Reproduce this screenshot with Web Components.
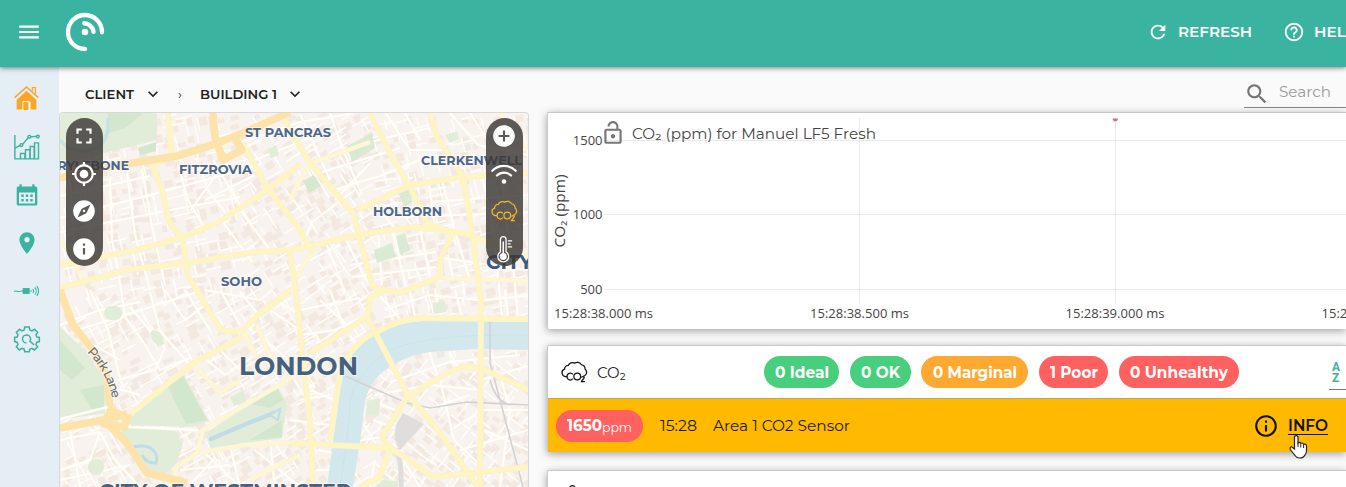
<!DOCTYPE html>
<html lang="en">
<head>
<meta charset="utf-8">
<title>Building sensors</title>
<style>
html,body{margin:0;height:100%;overflow:hidden;background:#fafafa;font-family:Montserrat,Inter,"Noto Sans",sans-serif}
</style>
</head>
<body>
<sensor-app></sensor-app>
<script>
const define = (name, html, after) => customElements.define(name, class extends HTMLElement {
  constructor(){ super(); this.attachShadow({mode:'open'}); }
  connectedCallback(){
    if (this.ready) return;
    this.ready = true;
    const t = document.createElement('template');
    t.innerHTML = typeof html === 'function' ? html(this) : html;
    this.shadowRoot.append(t.content.cloneNode(true));
    if (after) after(this);
  }
});

const CO2 = '<g fill="none" stroke="currentColor" stroke-width="1.15"><path d="M5.7 16.2H4.2A3.5 3.5 0 0 1 3.3 9.4A3.6 3.6 0 0 1 6.8 5.8A4.2 4.2 0 0 1 12.5 3.8A4.6 4.6 0 0 1 18.9 5.3A3.9 3.9 0 0 1 22.2 9.2A3.8 3.8 0 0 1 22.1 15.3L20.4 16"/><path d="M10.9 14.2A3 3.2 0 1 0 10.9 18.2"/><circle cx="15" cy="16.2" r="3.1"/><path d="M18.9 17.3C19.2 15.8 21.7 16 21.4 17.5C21.2 18.6 19.3 19.4 18.9 20.8H22"/></g>';
const ICONS = {
  menu:'<path d="M3 18h18v-2H3v2zm0-5h18v-2H3v2zm0-7v2h18V6H3z"/>',
  refresh:'<path d="M17.65 6.35C16.2 4.9 14.21 4 12 4c-4.42 0-7.99 3.58-7.99 8s3.57 8 7.99 8c3.73 0 6.84-2.55 7.73-6h-2.08c-.82 2.33-3.04 4-5.65 4-3.31 0-6-2.69-6-6s2.69-6 6-6c1.66 0 3.14.69 4.22 1.78L13 11h7V4l-2.35 2.35z"/>',
  help:'<path d="M11 18h2v-2h-2v2zm1-16C6.48 2 2 6.48 2 12s4.48 10 10 10 10-4.48 10-10S17.52 2 12 2zm0 18c-4.41 0-8-3.59-8-8s3.59-8 8-8 8 3.59 8 8-3.59 8-8 8zm0-14c-2.21 0-4 1.79-4 4h2c0-1.1.9-2 2-2s2 .9 2 2c0 2-3 1.75-3 5h2c0-2.25 3-2.5 3-5 0-2.21-1.79-4-4-4z"/>',
  search:'<path d="M15.5 14h-.79l-.28-.27C15.41 12.59 16 11.11 16 9.5 16 5.91 13.09 3 9.5 3S3 5.91 3 9.5 5.91 16 9.5 16c1.61 0 3.09-.59 4.23-1.57l.27.28v.79l5 4.99L20.49 19l-4.99-5zm-6 0C7.01 14 5 11.99 5 9.5S7.01 5 9.5 5 14 7.01 14 9.5 11.99 14 9.5 14z"/>',
  down:'<path d="M7.41 8.59L12 13.17l4.59-4.58L18 10l-6 6-6-6z"/>',
  full:'<path d="M7 14H5v5h5v-2H7v-3zm-2-4h2V7h3V5H5v5zm12 7h-3v2h5v-5h-2v3zM14 5v2h3v3h2V5h-5z"/>',
  gps:'<path d="M12 8c-2.21 0-4 1.79-4 4s1.79 4 4 4 4-1.79 4-4-1.79-4-4-4zm8.94 3c-.46-4.17-3.77-7.48-7.94-7.94V1h-2v2.06C6.83 3.52 3.52 6.83 3.06 11H1v2h2.06c.46 4.17 3.77 7.48 7.94 7.94V23h2v-2.06c4.17-.46 7.48-3.77 7.94-7.94H23v-2h-2.06zM12 19c-3.87 0-7-3.13-7-7s3.13-7 7-7 7 3.13 7 7-3.13 7-7 7z"/>',
  explore:'<path d="M12 10.9c-.61 0-1.1.49-1.1 1.1s.49 1.1 1.1 1.1c.61 0 1.1-.49 1.1-1.1s-.49-1.1-1.1-1.1zM12 2C6.48 2 2 6.48 2 12s4.48 10 10 10 10-4.48 10-10S17.52 2 12 2zm2.19 12.19L6 18l3.81-8.19L18 6l-3.81 8.19z"/>',
  info:'<path d="M12 2C6.48 2 2 6.48 2 12s4.48 10 10 10 10-4.48 10-10S17.52 2 12 2zm1 15h-2v-6h2v6zm0-8h-2V7h2v2z"/>',
  add:'<path d="M12 2C6.48 2 2 6.48 2 12s4.48 10 10 10 10-4.48 10-10S17.52 2 12 2zm5 11h-4v4h-2v-4H7v-2h4V7h2v4h4v2z"/>',
  wifi:'<g fill="none" stroke="currentColor" stroke-width="2.1" stroke-linecap="round"><path d="M1.2 9A15.2 15.2 0 0 1 22.8 9"/><path d="M5.5 13.400A9.4 9.4 0 0 1 18.5 13.400"/></g><circle cx="12" cy="19" r="2.1"/>',
  thermo:'<g fill="none" stroke="currentColor" stroke-width="1.2"><path d="M8.7 14.6V3.2A2.6 2.6 0 0 1 13.9 3.2V14.6A5 5 0 1 1 8.7 14.6Z"/><path d="M15.5 4.5h4M15.5 7.3h2.6M15.5 10.1h4"/></g><circle cx="11.3" cy="18.9" r="3.2"/><path d="M10.6 5h1.4v12h-1.4z"/>',
  co2:CO2,
  lock:'<path d="M12 17c1.1 0 2-.9 2-2s-.9-2-2-2-2 .9-2 2 .9 2 2 2zm6-9h-1V6c0-2.76-2.24-5-5-5S7 3.24 7 6h1.9c0-1.71 1.39-3.1 3.1-3.1 1.71 0 3.1 1.39 3.1 3.1v2H6c-1.1 0-2 .9-2 2v10c0 1.1.9 2 2 2h12c1.1 0 2-.9 2-2V10c0-1.1-.9-2-2-2zm0 12H6V10h12v10z"/>',
  infoline:'<path d="M11 7h2v2h-2zm0 4h2v6h-2zm1-9C6.48 2 2 6.48 2 12s4.48 10 10 10 10-4.48 10-10S17.52 2 12 2zm0 18c-4.41 0-8-3.59-8-8s3.59-8 8-8 8 3.59 8 8-3.59 8-8 8z"/>',
  place:'<path d="M12 2C8.13 2 5 5.13 5 9c0 5.25 7 13 7 13s7-7.75 7-13c0-3.87-3.13-7-7-7zm0 9.5c-1.38 0-2.5-1.12-2.5-2.5s1.12-2.5 2.5-2.5 2.5 1.12 2.5 2.5-1.12 2.5-2.5 2.5z"/>',
  home:'<path d="M2.5 13.4 12 4.6l9.5 8.8V22.6H16V15H11.6v7.6H2.5z"/><path d="M.6 11.2 12 1l11.4 10.2" fill="none" stroke="currentColor" stroke-width="1.4"/><path d="M17.6 4.8V1.6h3v5.8" fill="none" stroke="currentColor" stroke-width="1.2"/><path d="M8.6 23v-8h5.8v8" fill="none" stroke="#fff" stroke-width=".9"/><path d="M9.2 15.5h4.6V23H9.2z"/>',
  chart:'<g fill="none" stroke="currentColor" stroke-width="1.3"><path d="M.8 1v22H23.3M6 22.8V18h4v4.8M10.6 22.8V14.6h4v8.2M15 22.8v-9.600h0v-1.600h3.600v11.200M19 22.8V8.2h3.600v14.600M1 13 5.600 10.600M8 9.600 13 3.400M15.600 2.600 21 2.200"/><circle cx="6.8" cy="10.2" r="1.3"/><circle cx="14.2" cy="2.600" r="1.3"/><circle cx="22" cy="2.400" r="1.3"/></g>',
  calendar:'<path fill-rule="evenodd" d="M3 3.600H4.500V1.200h2.200v2.400h10.600V1.200h2.200v2.400H21A1.600 1.600 0 0 1 22.300 5.200V21a1.600 1.600 0 0 1-1.600 1.600H3.300A1.600 1.600 0 0 1 1.700 21V5.200A1.600 1.600 0 0 1 3 3.600zM4 9.600V20.500H20V9.600z"/><path d="M6.300 11.500h2.400v2.400H6.300zM10.800 11.500h2.400v2.400h-2.400zM15.300 11.500h2.400v2.400h-2.400zM6.300 16h2.400v2.400H6.300zM10.800 16h2.400v2.400h-2.400zM15.300 16h2.400v2.400h-2.400z"/>',
  sensor:'<path d="M8 9.300h6.500v5.400H8z"/><g fill="none" stroke="currentColor" stroke-width="1"><path d="M0 12.400C2 11 3 12.900 5 12.400S7 12 8.500 12M14.500 12h2M17.500 10.300A3 3 0 0 1 17.500 13.700M19.200 8.600A5 5 0 0 1 19.200 15.400M21 7.400A7 7 0 0 1 21 16.600"/></g>',
  gear:'<g fill="none" stroke="currentColor" stroke-width="1.400"><path d="M9.900 1h4.200l.5 2.700 2 .8 2.300-1.500 2.900 2.900-1.500 2.300.8 2 2.300.4v3.800l-2.300.5-.8 2.100 1.400 2.200-2.800 2.900-2.300-1.500-2 .8-.5 2.400H9.900l-.5-2.400-2.100-.8-2.200 1.500-2.900-2.900 1.500-2.200-.9-2.100L.6 14.400v-3.800l2.300-.4.8-2L2.200 5.900 5.100 3l2.300 1.500 2-.8z"/><path d="M11.500 15.600A3.700 3.700 0 1 1 15.300 11.700Q15.300 13 14.700 13.900L18.600 17.600"/></g>'
};

define('app-icon', el => {
  const s = el.getAttribute('size') || 24;
  return `<style>:host{display:block;flex:none;width:${s}px;height:${s}px}svg{display:block;overflow:visible}</style>
  <svg width="${s}" height="${s}" viewBox="0 0 24 24" fill="currentColor">${ICONS[el.getAttribute('name')]}</svg>`;
});

define('app-header', `<style>
:host{display:flex;align-items:center;height:67px;box-sizing:border-box;padding:0 0 3px 16px;background:#3ab4a0;color:#fff;box-shadow:0 1px 5px rgba(0,0,0,.5);position:relative;z-index:5;flex:none;overflow:visible}
.logo{margin-left:22px;flex:none}
.actions{margin-left:auto;margin-right:-11px;display:flex;align-items:center;flex:none;font-weight:600;font-size:15px}
.actions fit-text{margin-top:-1px}
.help{margin-left:31px}.actions app-icon{margin-right:9px}
</style>
<app-icon name="menu" size="26"></app-icon>
<svg class="logo" width="42" height="42" viewBox="0 0 42 42" fill="none" stroke="#fff" stroke-linecap="round"><path d="M38 21.300A17 17 0 1 0 21 38" stroke-width="4.300"/><path d="M20.300 12.300A9.800 9.800 0 0 1 29.500 20.800" stroke-width="4.400"/><circle cx="21" cy="21" r="3.300" fill="#fff" stroke="none"/></svg>
<div class="actions">
<app-icon name="refresh" size="22"></app-icon><fit-text w="74">REFRESH</fit-text>
<app-icon class="help" name="help" size="22"></app-icon><fit-text w="43">HELP</fit-text>
</div>`);

define('side-nav', `<style>
:host{display:flex;flex-direction:column;align-items:center;width:59px;flex:none;box-sizing:border-box;padding:19px 6px 0 0;gap:22px;background:#e5eef5;color:#3ab4a0}
app-icon:first-of-type{color:#fba526;margin-bottom:1px}
.cal{margin:1px 0}
</style>
<app-icon name="home" size="25"></app-icon><app-icon name="chart" size="26"></app-icon><app-icon name="calendar" class="cal" size="24"></app-icon><app-icon name="place" size="26"></app-icon><app-icon name="sensor" size="26"></app-icon><app-icon name="gear" size="26"></app-icon>`);

define('top-bar', `<style>
:host{display:flex;height:45px;flex:none;align-items:center;color:#222;font-weight:600;font-size:13px;padding-left:26px;box-sizing:border-box;padding-top:8px}
.sep{margin:0 16px 0 15px;font-weight:400;width:6px}
app-icon{margin-left:9px}
.search{margin-left:auto;width:102px;height:32px;display:flex;align-items:center;border-bottom:1px solid #888;color:#757575;box-sizing:border-box;font-weight:400;font-size:15.500px;align-self:flex-start;margin-top:1px}
.search app-icon{margin:5px 9px 0 0}
.search fit-text{color:#999}
</style>
<fit-text w="49">CLIENT</fit-text><app-icon name="down" size="20"></app-icon><span class="sep">›</span><fit-text w="77">BUILDING 1</fit-text><app-icon name="down" size="20" style="margin-left:8px"></app-icon>
<div class="search"><app-icon name="search" size="26"></app-icon><fit-text w="52">Search</fit-text></div>`);

define('map-toolbar', `<style>
:host{display:flex;flex-direction:column;align-items:center;box-sizing:border-box;width:37px;height:148px;border-radius:18.500px;background:rgba(58,55,52,.82);color:#fff;padding:5px 1px 5px 0;gap:11.500px}
::slotted(app-icon){color:inherit}
</style><slot></slot>`);

/* Street map: parks and river first, then the side-street mesh, main roads and place names. */
const mainRoads = [
 'M168 113L171 153L153 167L163 193L168 220L183 240L188 277L197 290L220 329Q232 334 243 330L260 313L290 290',
 'M60 265L137 250L183 237L217 223L267 190L300 165',
 'M60 288L127 270L193 262L247 253L290 250L323 243L357 235L413 227L463 233L490 243L528 258',
 'M242 143L267 187L300 230L312 253','M281 113L290 130L310 163L353 213L360 240L373 287',
 'M370 113L390 153L410 187L427 223L453 233','M357 210L410 185L463 177L528 173',
 'M430 113L437 137L463 177L473 237L481 300L480 487','M453 233L440 260L440 277L400 293L373 287',
 'M330 440L340 373L350 353Q365 335 377 332Q400 318 423 318L528 319',
 'M367 317L370 297L385 290M367 317L310 353','M367 317L407 393L440 433L478 487','M407 397L447 373L463 367L480 368L528 390',
 'M407 397L382 437L390 447L380 477L360 487','M390 447L433 477L528 467','M290 443L390 448',
 'M290 253L296 290L300 333L310 423L313 487','M127 417L193 363L243 337'
];
const midRoads = [
 'M440 278L528 281','M170 487L177 467L197 453L244 445L300 442','M197 453L203 430L300 373','M193 363L220 393L240 380',
 'M250 480L300 455','M500 110L510 137L528 150','M290 200L300 180L312 163L370 142M60 243L70 250L84 284',
 'M243 330L262 368M257 325L272 360','M312 253L300 270L292 290L265 312'
];
const fineRoads = [
 'M110 180L112 240L118 270L125 315M127 173L135 235L150 290M142 169L152 226L165 285M60 218L150 195L260 165M60 232L160 212L240 197M84 180L92 260M70 182L75 255M98 178L103 257',
 'M178 165L188 200L207 232M196 158L208 190L228 216M213 160L240 205M60 196L150 176M190 211L214 178L238 150L262 140M220 218L252 262M237 206L270 250M205 200L255 175',
 'M240 143L300 122L350 114M255 160L310 138M330 113L343 150L362 195M345 150L385 138L430 128M300 114L330 180M322 172L400 148M385 112L410 150L446 150M405 113L420 140M450 113L478 145L528 155M470 113L500 160',
 'M333 190L380 176L420 160M335 200L370 163M373 202L395 228M388 195L412 226M428 178L435 226M442 180L455 232M482 175L495 240M501 174L510 250M430 202L528 195M434 216L528 212',
 'M300 250L312 222L355 190M290 270L340 245M326 243L345 292M345 238L366 280M378 232L382 285M420 228L430 278M392 229L406 287M350 265L436 252M352 277L436 267M456 235L470 280M495 245L502 318M512 253L518 318M442 258L528 270',
 'M60 325L100 310L140 302M80 329L110 320L200 291M90 290L108 330L120 378M125 317L142 340L160 370L190 358M150 292L160 331L190 365M117 380L155 370L165 348L130 307M85 340L120 360M165 290L185 320L205 305M185 290L210 330M105 385L140 395',
 'M220 290L240 325M205 290L260 300L272 290M240 292L258 314M270 310L300 330M276 300L300 315M200 355L225 375L270 345M220 350L240 370M265 340L300 370M300 335L335 330L365 316M320 300L350 328M306 370L335 350M310 390L335 400M300 310L360 298M330 290L345 330',
 'M385 310L430 295L480 300M410 292L415 316M435 290L440 316M455 290L462 317M380 296L400 319M484 300L528 296M505 290L508 318',
 'M390 382L450 362L520 355M375 395L430 385L480 390M430 355L438 376M450 352L458 368M373 420L400 430M480 380L528 366M480 410L528 410M440 380L454 440L480 465M425 410L470 395M450 430L480 412M460 450L528 430M500 375L510 410L500 487M370 400L395 410M362 440L382 437M484 430L528 450M375 460L370 487M400 455L420 487',
 'M60 440L100 432L90 460L60 470M70 430L80 487M100 432L115 460L140 487M60 480L130 465M300 400L330 395M290 420L330 425M270 440L275 487M230 446L240 487M205 453L240 487M180 470L230 465M318 450L345 455M316 470L350 470M255 450L300 487M190 485L215 458'
];
const orangeRoads = ['M60 178L90 170L132 163L177 156L212 145L243 133L290 112','M213 113L215 137L223 160L242 150L236 140','M60 290L73 325L93 350L107 377L110 410L127 418','M60 428L103 420L127 414M107 423L127 443L147 473L187 483','M110 411L104 424L125 427L128 414'];
define('map-panel', () => {
  const road = (list, cls) => list.map(d => `<path class="${cls}" d="${d}"/>`).join('');
  let seed = 7; const rnd = () => (seed = (seed * 16807) % 2147483647) / 2147483647;
  let blocks = '', lanes = '';
  for (let y = 116; y < 490; y += 9) for (let x = 62; x < 530; x += 11) {
    const a = x < 230 ? (y < 290 ? -13 : -28) : (x < 360 ? -32 : (y > 350 ? 38 : -14));
    const px = x + rnd()*5, py = y + rnd()*4;
    if (rnd() < .62) blocks += `<rect x="${px.toFixed(1)}" y="${py.toFixed(1)}" width="${(5+rnd()*6).toFixed(1)}" height="${(4+rnd()*5).toFixed(1)}" transform="rotate(${a} ${px.toFixed(1)} ${py.toFixed(1)})"/>`;
    if (rnd() < .5) { const b = (a + (rnd()<.5?0:90)) * Math.PI/180, l = 8 + rnd()*17;
      lanes += `M${px.toFixed(1)} ${py.toFixed(1)}l${(Math.cos(b)*l).toFixed(1)} ${(Math.sin(b)*l).toFixed(1)}`; }
  }
  return `<style>
:host{display:block;position:relative;width:468px;flex:none;border:1px solid #d6d8da;border-bottom:0;border-radius:4px 4px 0 0;overflow:hidden;background:#f8f3ee}
svg.map{display:block}
.fine{fill:none;stroke:#fffefa;stroke-width:2;stroke-linejoin:round}
.creamy{fill:none;stroke:#fdf5da;stroke-width:2.800;opacity:.5}
.case{fill:none;stroke:#f9f1d6;stroke-width:6;stroke-linejoin:round}
.main{fill:none;stroke:#fff5c0;stroke-width:4.300;stroke-linejoin:round}
.midcase{fill:none;stroke:#faf2dc;stroke-width:4.600;stroke-linejoin:round}
.mid{fill:none;stroke:#fff7d2;stroke-width:3.200;stroke-linejoin:round}
.ocase{fill:none;stroke:#f8e3b2;stroke-width:7.600;stroke-linejoin:round}
.orange{fill:none;stroke:#fde3a8;stroke-width:6.200;stroke-linejoin:round}
.park{fill:#e1edd8}.grove{fill:#d2e7cd}.water{fill:#d3e8ec}
text{fill:#4c678b;font-family:Montserrat,Inter,sans-serif;font-weight:700;font-size:12.500px;stroke:#fff;stroke-opacity:.55;stroke-width:2px;paint-order:stroke}
.left,.right{position:absolute;top:5px}.left{left:6px}.right{right:5px}
.sun{color:#f3b921!important}
</style>
<svg class="map" width="468" height="374" viewBox="60 113 468 374">
<g fill="#f2e6dc" opacity=".75">${blocks}</g><path d="${lanes}" fill="none" stroke="#fffdfa" stroke-width="1.500"/>
${road(fineRoads,'creamy')}${road(fineRoads,'fine')}
<path class="park" d="M60 113H157V140L60 164z"/><path class="grove" d="M108 113H143L125 128L106 134zM138 148L156 142V151L140 155z"/>
<path d="M60 140Q70 154 90 150T108 118" fill="none" stroke="#c8e2e4" stroke-width="3.500"/>
<path class="park" d="M60 327L87 353L105 380V413L60 420z"/><path class="grove" d="M60 340L85 368L72 380L60 370zM80 390L104 385V410L92 409z"/>
<path class="park" d="M129 416L184 375L209 421L193 427L130 425z"/><path class="grove" d="M168 387L183 376L207 420L186 424z"/>
<path class="park" d="M120 433L130 427L176 431L183 443L177 463L166 474L148 473z"/><path d="M133 447Q147 444 153 450T156 463Q147 464 142 455" fill="none" stroke="#c1dce9" stroke-width="3"/>
<path class="park" d="M206 433L277 386L287 403L282 438L210 448z"/><path class="grove" d="M250 404L277 388L283 400L270 408zM250 440L282 420V437z"/>
<path d="M211 439L246 424L279 411" fill="none" stroke="#c1dce9" stroke-width="4.500" stroke-linecap="round"/><path d="M270 415L280 409L278 420z" class="park" stroke="#c1dce9" stroke-width="2"/>
<rect class="park" x="104" y="306" width="18" height="14" rx="7"/><ellipse class="park" cx="157" cy="338" rx="5" ry="9" transform="rotate(-35 157 338)"/><circle class="park" cx="96" cy="467" r="8"/>
<path class="grove" d="M303 181L314 175L321 186L309 193z" opacity=".9"/><path class="grove" d="M347 146L372 133L375 148L352 162zM399 194L411 189L412 202L404 207zM374 250L392 243L396 257L377 263zM396 236L405 233L410 250L400 255z" opacity=".8"/>
<path class="park" d="M367 401L380 398L379 416L366 415zM230 397L244 390L246 402L234 406zM268 150L276 145L279 155L271 158zM433 303L445 301L446 312L434 314zM445 135L457 131L459 139L450 143zM375 487L383 480L398 481V487z"/>
<path class="water" d="M327 487L340 390L346 362Q358 338 377 333Q395 323 423 321L528 322V350L477 349L430 352Q400 356 378 376Q364 390 363 420L353 487z"/>
<path d="M340 487Q349 430 350 405T385 353Q420 333 528 335" fill="none" stroke="#c9e0e6" stroke-width=".7"/>
<path d="M403 413L424 424L400 450Q392 440 396 425z" fill="#e0dedc"/><path d="M397 448Q402 465 401 487" fill="none" stroke="#e0dedc" stroke-width="5"/>
<path d="M345 376L407 403L430 408L467 402L528 405M490 320L490 363L500 400L523 487M490 380Q496 402 510 405" fill="none" stroke="#d3d1d3" stroke-width="1.600"/>
${road(midRoads,'midcase')}${road(midRoads,'mid')}${road(mainRoads,'case')}${road(mainRoads,'main')}${road(orangeRoads,'ocase')}${road(orangeRoads,'orange')}
<path d="M60 419L108 407M128 427L198 430" stroke="#fffef8" stroke-width="2.500" fill="none"/>
<text x="245" y="137" textLength="86" lengthAdjust="spacingAndGlyphs">ST PANCRAS</text>
<text x="179" y="174" textLength="73" lengthAdjust="spacingAndGlyphs">FITZROVIA</text>
<text x="36" y="170" textLength="93" lengthAdjust="spacingAndGlyphs">MARYLEBONE</text>
<text x="421" y="165" textLength="101" lengthAdjust="spacingAndGlyphs">CLERKENWELL</text>
<text x="373" y="216" textLength="69" lengthAdjust="spacingAndGlyphs">HOLBORN</text>
<text x="221" y="286" textLength="41" lengthAdjust="spacingAndGlyphs">SOHO</text>
<text x="486" y="269" style="font-size:19px;fill:#3b5b86" textLength="47" lengthAdjust="spacingAndGlyphs">CITY</text>
<text x="239" y="375" style="font-size:25px;fill:#46617f" textLength="119" lengthAdjust="spacingAndGlyphs">LONDON</text>
<text x="99" y="498" style="font-size:19px;fill:#46617f" textLength="252" lengthAdjust="spacingAndGlyphs">CITY OF WESTMINSTER</text>
<path id="pl" d="M87 352Q107 372 113 401" fill="none"/>
<text style="font-size:12.500px;font-weight:500;fill:#6b6a6a"><textPath href="#pl" textLength="54">Park Lane</textPath></text>
</svg>
<map-toolbar class="left"><app-icon name="full" size="26"></app-icon><app-icon name="gps" size="26"></app-icon><app-icon name="explore" size="26"></app-icon><app-icon name="info" size="26"></app-icon></map-toolbar>
<map-toolbar class="right"><app-icon name="add" size="26"></app-icon><app-icon name="wifi" size="26"></app-icon><app-icon name="co2" size="26" class="sun"></app-icon><app-icon name="thermo" size="26"></app-icon></map-toolbar>`;
});

define('paper-card', `<style>
:host{display:block;background:#fff;border:1px solid #c9c9c9;border-right:0;border-bottom:0;border-radius:2px 0 0 2px;box-shadow:0 2px 9px rgba(0,0,0,.36);box-sizing:border-box;flex:none}
</style><slot></slot>`);

define('ppm-chart', `<style>
:host{display:block;position:relative;height:216px;overflow:hidden}
svg{display:block}
text{font:13px "Open Sans",sans-serif;fill:#444}
.title{position:absolute;left:52px;top:7px;display:flex;align-items:center;color:#777;gap:6px;font-size:15px}
.title fit-text{color:#444}
</style>
<svg width="850" height="216" viewBox="548 113 850 216">
<g stroke="#e9e9e9" shape-rendering="crispEdges"><path d="M604 140.500H1400M604 214.500H1400M604 289.500H1400M859.500 118V304M1115.500 118V304"/></g>
<path d="M1112.500 118.500h5.500q-.5 3-2.700 3t-2.800-3z" fill="#e06a80"/>
<g text-anchor="end"><text x="602.500" y="145">1500</text><text x="602.500" y="219">1000</text><text x="602.500" y="294">500</text></g>
<g text-anchor="middle"><text x="603.500" y="318" textLength="99">15:28:38.000 ms</text><text x="859.500" y="318" textLength="99">15:28:38.500 ms</text><text x="1115" y="318" textLength="99">15:28:39.000 ms</text><text x="1371" y="318" textLength="99">15:28:39.500 ms</text></g>
<text transform="translate(565 247.500) rotate(-90)" style="font-size:14px" textLength="73" lengthAdjust="spacingAndGlyphs">CO₂ (ppm)</text>
</svg>
<div class="title"><app-icon name="lock" size="26"></app-icon><fit-text w="244">CO₂ (ppm) for Manuel LF5 Fresh</fit-text></div>`);

define('status-pill', `<style>
:host{display:flex;align-items:center;justify-content:center;height:32px;border-radius:16px;color:#fff;font-weight:700;font-size:15.500px;flex:none;box-sizing:border-box;background:#48cf7e}
:host([tone=warn]){background:#ffa931}:host([tone=bad]){background:#ff6161}
</style><slot></slot>`, el => { el.style.width = el.getAttribute('w') + 'px'; });

define('sensor-group', `<style>
:host{display:block;height:106px;color:#222;font-size:15.500px}
.head{display:flex;align-items:center;height:52px;padding-left:13px}
.pills{display:flex;gap:11px;margin-left:138px}
.head>app-icon{margin-right:10px;color:#111}
.sort{margin-left:90px;width:30px;height:34px;border-bottom:1px solid #777;box-sizing:border-box;color:#3ab4a0;font:700 12px/11px Roboto,sans-serif;padding:6px 0 0 3px;margin-top:1px;flex:none}
.sort span{display:block;height:11px}
.row{display:flex;align-items:center;height:53px;background:#ffba00;border-top:1px solid #b2a86c;padding-left:8px;color:#1c1a12}
.time{margin:0 16px 0 17px}
.ppm{font-weight:400;font-size:13.500px;margin-top:2px}
.info{margin-left:403px;display:flex;align-items:center;gap:9px;color:#111;font-weight:600;position:relative}
.info .link{border-bottom:1px solid #111;line-height:16px;margin-top:1px}
.hand{position:absolute;left:36px;top:21px}
</style>
<div class="head"><app-icon name="co2" size="26"></app-icon><fit-text w="29">CO₂</fit-text>
<div class="pills"><status-pill w="75"><fit-text w="54">0 Ideal</fit-text></status-pill><status-pill w="61" style="margin-right:-1px"><fit-text w="39">0 OK</fit-text></status-pill><status-pill w="107" tone="warn"><fit-text w="84">0 Marginal</fit-text></status-pill><status-pill w="69" tone="bad"><fit-text w="48">1 Poor</fit-text></status-pill><status-pill w="120" tone="bad"><fit-text w="98">0 Unhealthy</fit-text></status-pill></div>
<div class="sort"><span>A</span><span>Z</span></div></div>
<div class="row"><status-pill w="87" tone="bad"><fit-text w="35">1650</fit-text><fit-text class="ppm" w="30">ppm</fit-text></status-pill><fit-text class="time" w="37">15:28</fit-text><fit-text w="137">Area 1 CO2 Sensor</fit-text>
<div class="info"><app-icon name="infoline" size="26"></app-icon><fit-text class="link" w="40">INFO</fit-text>
<svg class="hand" width="22" height="26" viewBox="0 0 22 26"><path d="M5.500 2.500Q7.500.5 9 2.700V9Q10.500 7.600 11.800 9.300Q13.600 8.400 14.600 10.200Q17 9.500 17.500 12V17.500Q17 20 15.500 21.500Q14.500 24 10.500 24Q7.500 24 6 21.500L1.300 15.500Q.5 12.700 3 13L5.500 15z" fill="#fff" stroke="#222" stroke-width="1.200"/><path d="M9 9v4M11.800 9.500v4M14.600 10.500v3.500" stroke="#222" fill="none"/></svg></div></div>`);

define('sensor-app', `<style>
:host{display:flex;flex-direction:column;width:100vw;height:100vh;overflow:hidden}
.body{display:flex;flex:1;min-height:0}
.main{flex:1;min-width:0;display:flex;flex-direction:column}
.cols{display:flex;flex:1;min-height:0;gap:18px}
.cards{flex:1;min-width:0;display:flex;flex-direction:column}
.cards paper-card+paper-card{margin-top:16px}
.cards paper-card:last-child{margin-top:18px}
.next{height:60px;padding:14px 0 0 13px;color:#111}
</style>
<app-header></app-header>
<div class="body"><side-nav></side-nav><div class="main"><top-bar></top-bar>
<div class="cols"><map-panel></map-panel><div class="cards">
<paper-card><ppm-chart></ppm-chart></paper-card>
<paper-card><sensor-group></sensor-group></paper-card>
<paper-card><div class="next"><app-icon name="thermo" size="24"></app-icon></div></paper-card>
</div></div></div></div>`);

/* Stretches its slotted label to the width given in "w". */
define('fit-text', `<style>:host{display:block;flex:none;white-space:nowrap}span{display:inline-block;transform-origin:0 50%}</style><span><slot></slot></span>`, el => {
  const w = +el.getAttribute('w'), s = el.shadowRoot.querySelector('span');
  const n = s.getBoundingClientRect().width;
  el.style.width = w + 'px';
  if (n) s.style.transform = `scaleX(${w / n})`;
});
</script>
</body>
</html>
